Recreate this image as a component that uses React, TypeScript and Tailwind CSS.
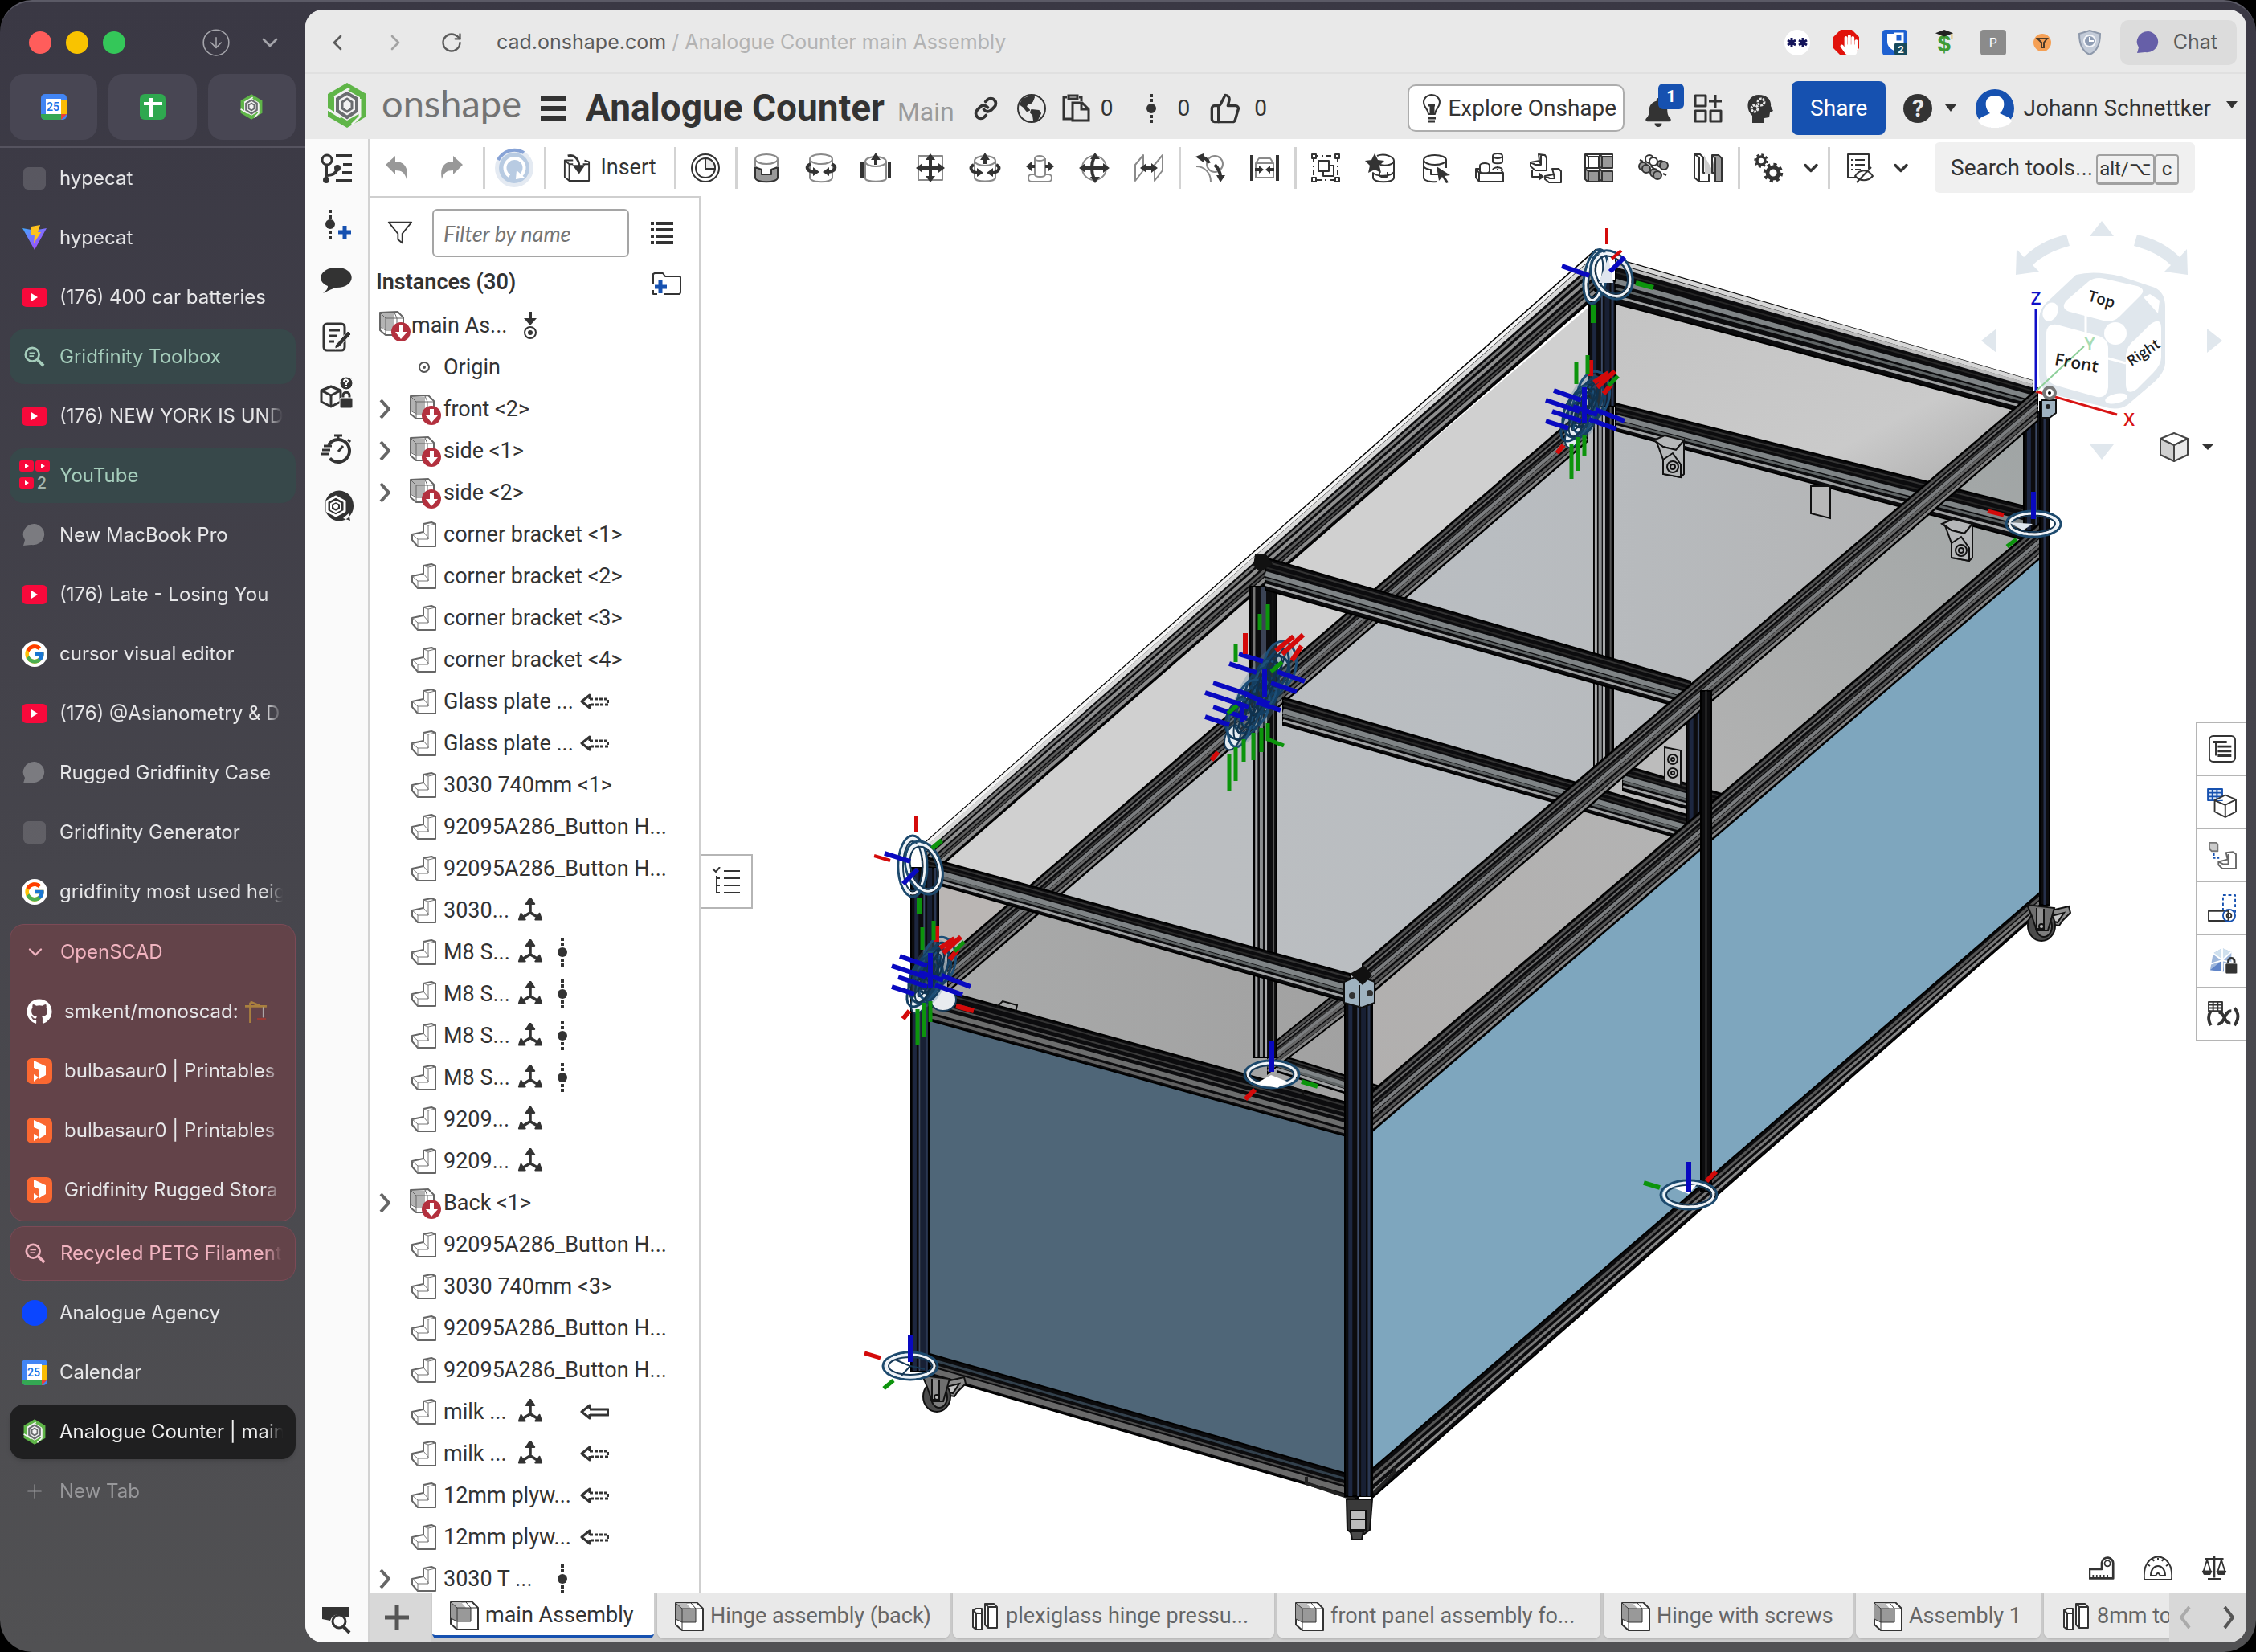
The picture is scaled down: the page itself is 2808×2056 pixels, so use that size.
import React from "react";
import {
  ChevronDown,
  ChevronLeft,
  ChevronRight,
  CircleArrowDown,
  Plus,
  RotateCw,
  Link as LinkIcon,
  ThumbsUp,
} from "lucide-react";
import { FaGithub, FaBell, FaHandPaper } from "react-icons/fa";
import { FcGoogle } from "react-icons/fc";

/* ---------- shared glyph helpers ---------- */

type GlyphProps = { children: React.ReactNode; className?: string; box?: string };

function Glyph({ children, className = "size-9", box = "0 0 36 36" }: GlyphProps) {
  return (
    <svg
      viewBox={box}
      className={`shrink-0 ${className}`}
      fill="none"
      stroke="#333"
      strokeWidth="2"
      strokeLinejoin="round"
      aria-hidden="true"
    >
      {children}
    </svg>
  );
}

function OnshapeMark({ className }: { className: string }) {
  return (
    <svg viewBox="0 0 50 56" className={`shrink-0 ${className}`} aria-hidden="true">
      <path d="M25 0 49 14V42L25 56 1 42V14Z" fill="#5fb548" />
      <path d="M25 9 41 18V38L25 47 9 38V18Z" fill="#f2f2f2" />
      <path d="M25 13 37 20V35L25 43 13 35V20Z" fill="none" stroke="#6a6d70" strokeWidth="4" />
      <path d="M25 20 31 24V32L25 36 19 32V24Z" fill="#f2f2f2" stroke="#6a6d70" strokeWidth="3" />
      <path d="M9 18 28 7M1 33 17 43M41 20V42L31 52" stroke="#f2f2f2" strokeWidth="3" fill="none" />
    </svg>
  );
}

function CalendarMark() {
  return (
    <svg viewBox="0 0 32 32" className="size-8 shrink-0" aria-hidden="true">
      <rect width="32" height="32" rx="5" fill="#4285f4" />
      <path d="M25 7h7v18h-7z" fill="#fbbc04" />
      <path d="M0 25h25v7H5a5 5 0 0 1-5-5z" fill="#34a853" />
      <path d="M25 25h7l-7 7z" fill="#ea4335" />
      <path d="M6 6h19v19H6z" fill="#fff" />
      <text x="15" y="21" fontSize="14" fontWeight="600" fontFamily="Roboto, sans-serif" textAnchor="middle" fill="#1a73e8">
        25
      </text>
    </svg>
  );
}

/* ---------- browser sidebar ---------- */

function TabIcon({ kind }: { kind: string }) {
  switch (kind) {
    case "blank":
      return <span className="size-7 rounded-md bg-white/15" />;
    case "vite":
      return (
        <svg viewBox="0 0 32 32" className="size-8" aria-hidden="true">
          <defs>
            <linearGradient id="vite" x1="0" y1="0" x2="1" y2="1">
              <stop offset="0" stopColor="#41a8ff" />
              <stop offset="1" stopColor="#bd34fe" />
            </linearGradient>
          </defs>
          <path d="M1 4 16 31 31 4 20 6H12Z" fill="url(#vite)" />
          <path d="m12 2 11-2-3 9h4l-9 14 1-10h-5z" fill="#ffc21e" />
        </svg>
      );
    case "youtube":
      return (
        <span className="flex h-6 w-8 items-center justify-center rounded-md bg-[#f8093b]">
          <span className="border-y-[5px] border-l-[8px] border-y-transparent border-l-white" />
        </span>
      );
    case "youtubes":
      return (
        <svg viewBox="0 0 38 38" className="size-[38px]" aria-hidden="true">
          {[
            [0, 0],
            [20, 0],
            [0, 21],
          ].map(([x, y]) => (
            <g key={`${x}-${y}`} transform={`translate(${x} ${y})`}>
              <rect width="18" height="14" rx="3" fill="#f8093b" />
              <path d="m7 4 5 3-5 3z" fill="#fff" />
            </g>
          ))}
          <text x="28" y="35" fontSize="20" fontWeight="500" fontFamily="Inter, sans-serif" textAnchor="middle" fill="#a3b5ae">
            2
          </text>
        </svg>
      );
    case "search":
      return (
        <svg viewBox="0 0 28 28" className="size-[26px]" fill="none" stroke="currentColor" strokeWidth="3" aria-hidden="true">
          <circle cx="11" cy="11" r="9" />
          <path d="m18 18 8 8" strokeWidth="4" />
          <path d="M7 9h8M7 13h6" strokeWidth="2" />
        </svg>
      );
    case "chat":
      return (
        <svg viewBox="0 0 30 28" className="h-7 w-[30px]" fill="#7b7b80" aria-hidden="true">
          <path d="M15 0a14 13 0 1 1-4 26L1 27l2-7A14 13 0 0 1 15 0Z" />
        </svg>
      );
    case "google":
      return (
        <span className="flex size-8 items-center justify-center rounded-full bg-white">
          <FcGoogle className="size-7" />
        </span>
      );
    case "github":
      return <FaGithub className="size-8 text-white" />;
    case "printables":
      return (
        <svg viewBox="0 0 32 32" className="size-8" aria-hidden="true">
          <rect width="32" height="32" rx="7" fill="#fa6831" />
          <path d="M9 3 24 10V21L16 26V15L9 12Z" fill="#fff" />
          <path d="m9 20 6 4-6 5z" fill="#fff" />
        </svg>
      );
    case "blue":
      return <span className="size-8 rounded-full bg-[#0b46ff]" />;
    case "calendar":
      return <CalendarMark />;
    case "onshape":
      return <OnshapeMark className="h-8 w-7" />;
    case "chevron":
      return <ChevronDown className="size-7" />;
    default:
      return <Plus className="size-7" strokeWidth={1} />;
  }
}

type Tab = { icon: string; label: string; tone?: "plain" | "green" | "rose" | "active" | "muted" | "group"; crane?: boolean };

const topTabs: Tab[] = [
  { icon: "blank", label: "hypecat" },
  { icon: "vite", label: "hypecat" },
  { icon: "youtube", label: "(176) 400 car batteries" },
  { icon: "search", label: "Gridfinity Toolbox", tone: "green" },
  { icon: "youtube", label: "(176) NEW YORK IS UND" },
  { icon: "youtubes", label: "YouTube", tone: "green" },
  { icon: "chat", label: "New MacBook Pro" },
  { icon: "youtube", label: "(176) Late - Losing You" },
  { icon: "google", label: "cursor visual editor" },
  { icon: "youtube", label: "(176) @Asianometry & D" },
  { icon: "chat", label: "Rugged Gridfinity Case" },
  { icon: "blank", label: "Gridfinity Generator" },
  { icon: "google", label: "gridfinity most used heig" },
];

const groupTabs: Tab[] = [
  { icon: "github", label: "smkent/monoscad:", crane: true },
  { icon: "printables", label: "bulbasaur0 | Printables" },
  { icon: "printables", label: "bulbasaur0 | Printables" },
  { icon: "printables", label: "Gridfinity Rugged Stora" },
];

const bottomTabs: Tab[] = [
  { icon: "search", label: "Recycled PETG Filament", tone: "rose" },
  { icon: "blue", label: "Analogue Agency" },
  { icon: "calendar", label: "Calendar" },
  { icon: "onshape", label: "Analogue Counter | main", tone: "active" },
  { icon: "plus", label: "New Tab", tone: "muted" },
];

const tones = {
  plain: "text-[#e6e6e8]",
  green: "bg-[#37484a] text-[#a5cdbb]",
  rose: "border border-[#7c4a56] bg-[#634349] text-[#f0b3bf]",
  active: "bg-[#1f1f20] text-[#f0f0f0] shadow-md",
  muted: "text-[#98989b]",
  group: "text-[#f0b3bf]",
};

function SidebarTab({ tab, inset = false }: { tab: Tab; inset?: boolean }) {
  return (
    <button
      type="button"
      className={`flex h-[68px] w-full shrink-0 items-center overflow-hidden rounded-[18px] pr-4 text-left text-2xl ${
        inset ? "pl-[5px]" : ""
      } ${tones[tab.tone ?? "plain"]}`}
    >
      <span className="flex w-[62px] shrink-0 items-center justify-center">
        <TabIcon kind={tab.icon} />
      </span>
      <span className="flex min-w-0 flex-1 items-center gap-2 overflow-hidden whitespace-nowrap [mask-image:linear-gradient(to_right,#000_92%,transparent)]">
        {tab.label}
        {tab.crane && (
          <svg viewBox="0 0 30 30" className="size-7 shrink-0" fill="none" stroke="#a9803f" strokeWidth="3" aria-hidden="true">
            <path d="M7 30V3M0 8h29M7 2l12 5" />
            <path d="M24 9v14" strokeWidth="1" stroke="#bbb" />
            <path d="M16 25h12" stroke="#9a3b35" />
          </svg>
        )}
      </span>
    </button>
  );
}

function Sidebar() {
  return (
    <aside className="flex w-[380px] shrink-0 flex-col font-['Inter',sans-serif]">
      <div className="flex h-[90px] items-center pt-3 pr-[28px] pl-9 text-[#a4a4aa]">
        <div className="flex gap-[18px]">
          <span className="size-7 rounded-full bg-[#ff5d5b]" />
          <span className="size-7 rounded-full bg-[#f9c300]" />
          <span className="size-7 rounded-full bg-[#34c759]" />
        </div>
        <button type="button" aria-label="Downloads" className="ml-auto">
          <CircleArrowDown className="size-[38px]" strokeWidth={1} />
        </button>
        <button type="button" aria-label="More" className="ml-8">
          <ChevronDown className="size-8" />
        </button>
      </div>
      <div className="grid grid-cols-3 gap-[14px] px-3">
        {["calendar", "sheets", "onshape"].map((kind) => (
          <button key={kind} type="button" aria-label={kind} className="flex h-[82px] items-center justify-center rounded-[18px] bg-[#484653]">
            {kind === "sheets" ? (
              <svg viewBox="0 0 32 32" className="size-8" aria-hidden="true">
                <rect width="32" height="32" rx="6" fill="#2fa84f" />
                <path d="M14 5v23M5 12h23" stroke="#fff" strokeWidth="4" />
              </svg>
            ) : (
              <TabIcon kind={kind} />
            )}
          </button>
        ))}
      </div>
      <hr className="mt-2 border-t-2 border-[#55535f]" />
      <nav className="mt-1 flex flex-col gap-[6px] px-3" aria-label="Tabs">
        {topTabs.map((tab, i) => (
          <SidebarTab key={i} tab={tab} />
        ))}
        <div className="flex flex-col gap-[6px] rounded-[18px] border border-[#7c4a56] bg-[#634349] pb-1">
          <SidebarTab tab={{ icon: "chevron", label: "OpenSCAD", tone: "group" }} />
          {groupTabs.map((tab, i) => (
            <SidebarTab key={i} tab={tab} inset />
          ))}
        </div>
        {bottomTabs.map((tab) => (
          <SidebarTab key={tab.label} tab={tab} />
        ))}
      </nav>
    </aside>
  );
}

/* ---------- browser bar ---------- */

function Extensions() {
  return (
    <div className="flex items-center gap-[29px]">
      <span className="flex size-8 items-center justify-center rounded-full bg-white">
        <svg viewBox="0 0 26 14" className="h-[14px] w-[26px]" stroke="#14145a" strokeWidth="3" aria-hidden="true">
          <path d="M6 1v12M1 4l10 6M11 4 1 10M20 1v12M15 4l10 6M25 4l-10 6" />
        </svg>
      </span>
      <svg viewBox="0 0 32 32" className="size-8" aria-hidden="true">
        <path d="M9 0h14l9 9v14l-9 9H9l-9-9V9Z" fill="#e1120b" />
        <FaHandPaper x="7" y="6" width="18" height="20" color="#fff" />
      </svg>
      <svg viewBox="0 0 32 32" className="size-8" aria-hidden="true">
        <rect width="31" height="32" rx="4" fill="#1f61d1" />
        <path d="M6 5h10v22c-6-3-10-7-10-12Z" fill="#fff" />
        <path d="M16 5h9v10H16Z" fill="none" stroke="#fff" strokeWidth="3" />
        <rect x="15" y="16" width="16" height="16" rx="3" fill="#174a5c" />
        <text x="23" y="29" textAnchor="middle" fontSize="13" fontWeight="700" fontFamily="Roboto, sans-serif" fill="#fff">
          2
        </text>
      </svg>
      <span className="relative flex size-8 items-end justify-center text-[27px] leading-7 font-bold text-[#3f9b35]">
        $
        <svg viewBox="0 0 26 14" className="absolute top-0 h-3 w-[26px]" aria-hidden="true">
          <path d="m13 0 13 5-13 5L0 5Z" fill="#222" />
          <path d="M24 6v8" stroke="#d9b33c" strokeWidth="2" />
        </svg>
      </span>
      <span className="flex size-8 items-center justify-center rounded bg-[#8b8b8b] text-base text-white">P</span>
      <span className="flex size-8 items-center justify-center">
        <svg viewBox="0 0 22 22" className="size-[22px]" aria-hidden="true">
          <circle cx="11" cy="11" r="11" fill="#f5a055" />
          <path d="M5 6h12l-4 5v6h-3v-6Z" fill="none" stroke="#4a3a2a" strokeWidth="2" />
        </svg>
      </span>
      <svg viewBox="0 0 28 32" className="h-8 w-7" aria-hidden="true">
        <path d="M14 1 27 5c0 14-4 22-13 26C5 27 1 19 1 5Z" fill="#c3cbd8" stroke="#8e99ab" strokeWidth="2" />
        <circle cx="14" cy="14" r="7" fill="#8f9db4" stroke="#f2f4f8" strokeWidth="2" />
        <path d="M14 9v5h5" stroke="#fff" strokeWidth="2" fill="none" />
      </svg>
    </div>
  );
}

function BrowserBar() {
  return (
    <div className="flex h-20 items-center border-b-2 border-[#e0e0e0] bg-[#e9e9e9] pt-1 pr-3 pl-6 font-['Inter',sans-serif] text-[25px] text-[#5b5b5b]">
      <button type="button" aria-label="Back">
        <ChevronLeft className="size-8" />
      </button>
      <button type="button" aria-label="Forward" className="ml-10 text-[#a3a3a3]">
        <ChevronRight className="size-8" />
      </button>
      <button type="button" aria-label="Reload" className="ml-10">
        <RotateCw className="size-7" />
      </button>
      <p className="ml-[42px] whitespace-nowrap">
        <span>cad.onshape.com</span>
        <span className="text-[#b3b3b3]"> / Analogue Counter main Assembly</span>
      </p>
      <div className="ml-auto">
        <Extensions />
      </div>
      <button type="button" className="ml-6 flex h-14 items-center gap-4 rounded-[10px] bg-[#dcdcdc] pr-6 pl-5">
        <svg viewBox="0 0 30 28" className="h-7 w-[30px]" fill="#665fa8" aria-hidden="true">
          <path d="M15 0a14 13 0 1 1-4 26L1 27l2-7A14 13 0 0 1 15 0Z" />
        </svg>
        Chat
      </button>
    </div>
  );
}

/* ---------- application header ---------- */

function VersionDot() {
  return (
    <Glyph className="h-9 w-4" box="0 0 16 36">
      <circle cx="8" cy="18" r="6" fill="#333" stroke="none" />
      <path d="M8 0v4M8 6v4M8 26v4M8 32v4" strokeWidth="4" />
    </Glyph>
  );
}

function AppHeader() {
  return (
    <header className="flex h-[81px] items-center bg-[#e9e9e9] pt-1 pr-[11px] pl-[27px] text-[28px] text-[#333]">
      <a href="#home" className="-mt-2 flex items-center gap-[18px]" aria-label="Onshape home">
        <OnshapeMark className="h-14 w-[50px]" />
        <span className="pb-1 font-['Lato',sans-serif] text-[47px] leading-none text-[#737373]">onshape</span>
      </a>
      <button type="button" aria-label="Menu" className="ml-6">
        <Glyph className="h-[30px] w-8" box="0 0 32 30">
          <path d="M0 3h32M0 15h32M0 27h32" strokeWidth="6" />
        </Glyph>
      </button>
      <h1 className="ml-6 text-[46px] font-bold whitespace-nowrap">Analogue Counter</h1>
      <span className="mt-2 ml-4 text-[32px] text-[#9b9b9b]">Main</span>
      <div className="ml-6 flex items-center">
        <button type="button" aria-label="Copy link">
          <LinkIcon className="size-[30px]" strokeWidth={3} />
        </button>
        <button type="button" aria-label="Public" className="ml-6">
          <Glyph>
            <circle cx="18" cy="18" r="17" />
            <path d="M7 7 16 3l5 1-2 5-3 3-3-1-2 5 4 4-3 1-4-5-4-3Z" fill="#333" />
            <path d="m18 20 9 1 2 3-4 8-4 1-1-7-3-3Z" fill="#333" />
          </Glyph>
        </button>
        <button type="button" className="ml-5 flex items-center gap-3">
          <Glyph>
            <path d="M6 4H2v27h10M24 9V4h-3M8 2h11v4H8Z" strokeWidth="3" strokeLinejoin="miter" />
            <path d="M13 11h12l8 8v14H13ZM24 11v8h9" strokeWidth="3" strokeLinejoin="miter" />
          </Glyph>
          0
        </button>
        <button type="button" className="ml-10 flex items-center gap-6">
          <VersionDot />0
        </button>
        <button type="button" className="ml-6 flex items-center gap-4">
          <ThumbsUp className="size-10" />0
        </button>
      </div>
      <button type="button" className="ml-auto flex h-[59px] items-center gap-2 rounded-[10px] border-2 border-[#adadad] bg-white pr-2 pl-4 whitespace-nowrap">
        <Glyph className="h-9 w-6" box="0 0 24 36">
          <path d="M8 25c0-6-6-8-6-15a10 9 0 0 1 20 0c0 7-6 9-6 15Z" />
          <path d="M8 14h8M11 15v10M14 15v10M7 30h10M8 34h8" strokeWidth="3" />
        </Glyph>
        Explore Onshape
      </button>
      <button type="button" aria-label="Notifications" className="relative ml-6 h-[62px] w-[50px]">
        <FaBell className="absolute bottom-2 left-0 size-9" />
        <span className="absolute top-0 right-0 flex size-8 items-center justify-center rounded-md bg-[#1651b0] text-xl font-bold text-white">1</span>
      </button>
      <button type="button" aria-label="Applications" className="ml-3">
        <Glyph>
          <path d="M2 2h13v13H2ZM2 21h13v13H2ZM21 21h13v13H21ZM27 1v16M19 9h16" strokeWidth="3" />
        </Glyph>
      </button>
      <button type="button" aria-label="Learning" className="ml-7">
        <Glyph>
          <path d="M17 1c11 0 16 7 15 14l3 6-4 2-1 6-6 1v6H9v-9C-1 18 3 1 17 1Z" fill="#333" stroke="none" />
          <circle cx="20" cy="10" r="4" stroke="#e9e9e9" strokeWidth="3" strokeDasharray="3 1" />
          <circle cx="12" cy="18" r="4" stroke="#e9e9e9" strokeWidth="3" strokeDasharray="3 1" />
        </Glyph>
      </button>
      <button type="button" className="ml-[22px] h-[67px] rounded-lg bg-[#1651b0] px-[23px] text-white">
        Share
      </button>
      <button type="button" aria-label="Help" className="ml-[22px] flex items-center gap-4">
        <span className="flex size-9 items-center justify-center rounded-full bg-[#333] text-3xl leading-none font-bold text-[#e9e9e9]">?</span>
        <span className="border-x-[7px] border-t-[9px] border-x-transparent border-t-[#333]" />
      </button>
      <button type="button" className="ml-6 flex items-center gap-[11px] whitespace-nowrap">
        <svg viewBox="0 0 48 48" className="size-12" aria-hidden="true">
          <circle cx="24" cy="24" r="24" fill="#1651b0" />
          <path d="M24 8c15 0 13 17 6 22 6 3 14 5 15 10-8 11-34 11-42 0 1-5 9-7 15-10-7-5-9-22 6-22Z" fill="#fff" />
        </svg>
        Johann Schnettker
        <span className="mb-2 ml-2 border-x-[7px] border-t-[9px] border-x-transparent border-t-[#333]" />
      </button>
    </header>
  );
}

/* ---------- toolbar ---------- */

const grey = "#8a8a8a";

const mateIcons: [string, React.ReactNode][] = [
  [
    "Fastened mate",
    <>
      <path d="M4 17v13c0 7 28 7 28 0V17l-8 3v6H12v-6Z" fill="#999" />
      <path d="M4 7v10M32 7v10" stroke={grey} />
      <ellipse cx="18" cy="7" rx="14" ry="6" stroke={grey} />
    </>,
  ],
  [
    "Revolute mate",
    <>
      <path d="M4 7v23c0 7 28 7 28 0V7" stroke={grey} />
      <ellipse cx="18" cy="7" rx="14" ry="6" stroke={grey} />
      <path d="M5 13c-7 3-5 9 4 10M31 13c7 3 5 9-4 10" strokeWidth="4" />
      <path d="m8 17 8 6-8 5ZM28 17l-8 6 8 5Z" fill="#333" stroke="none" />
    </>,
  ],
  [
    "Slider mate",
    <>
      <path d="M5 10v21c0 5 26 5 26 0V10" stroke={grey} />
      <ellipse cx="18" cy="10" rx="13" ry="6" stroke={grey} />
      <path d="M1 10v20M35 10v20M18 6v8" strokeWidth="4" />
      <path d="m18-1 6 9H12Z" fill="#333" stroke="none" />
    </>,
  ],
  [
    "Planar mate",
    <>
      <path d="M3 3h30v30H3Z" stroke={grey} />
      <path d="M18 6v24M6 18h24" strokeWidth="4" />
      <path d="m18 0 6 8H12ZM18 36l6-8H12ZM0 18l8-6v12ZM36 18l-8-6v12Z" fill="#333" stroke="none" />
    </>,
  ],
  [
    "Cylindrical mate",
    <>
      <path d="M5 9v21c0 6 26 6 26 0V9" stroke={grey} />
      <ellipse cx="18" cy="9" rx="13" ry="6" stroke={grey} />
      <path d="M4 14c-6 3-4 9 5 10M32 14c6 3 4 9-5 10M18 6v7" strokeWidth="4" />
      <path d="m8 18 8 6-8 5ZM28 18l-8 6 8 5ZM18-1l6 9H12Z" fill="#333" stroke="none" />
    </>,
  ],
  [
    "Pin slot mate",
    <>
      <rect x="4" y="26" width="29" height="9" rx="4" stroke={grey} />
      <path d="M12 6v20c0 4 13 4 13 0V6" stroke={grey} fill="#fff" />
      <ellipse cx="18" cy="6" rx="6" ry="3" stroke={grey} />
      <path d="M4 16h8M25 16h8" strokeWidth="4" />
      <path d="m1 16 7-6v12ZM36 16l-7-6v12Z" fill="#333" stroke="none" />
    </>,
  ],
  [
    "Ball mate",
    <>
      <circle cx="18" cy="18" r="15" stroke={grey} />
      <path d="M18 4c-4 9-4 19 0 28M4 18h28" strokeWidth="4" />
      <path d="m19-1 6 8H13ZM19 37l6-8H13ZM-1 18l8-6v12ZM37 18l-8-6v12Z" fill="#333" stroke="none" />
    </>,
  ],
  [
    "Parallel mate",
    <>
      <path d="M1 14 11 2v19L1 34ZM25 14 35 2v19L25 34Z" stroke={grey} />
      <path d="M12 18h12" strokeWidth="4" />
      <path d="m7 18 8-6v12ZM29 18l-8-6v12Z" fill="#333" stroke="none" />
    </>,
  ],
];

const relationIcons: [string, React.ReactNode][] = [
  [
    "Tangent mate",
    <>
      <circle cx="24" cy="13" r="10" stroke={grey} />
      <path d="M1 16c10 0 18 8 18 19" stroke={grey} />
      <path d="M6 5c4-1 9 2 11 7M24 14c4 4 7 9 7 15" strokeWidth="4" />
      <path d="M0 4 10 0v11ZM31 36l-5-9h11Z" fill="#333" stroke="none" />
    </>,
  ],
  [
    "Width mate",
    <>
      <path d="M2 2v32M34 2v32" strokeWidth="4" />
      <path d="M7 12v18h22V12l-4-6H11ZM7 12h22" stroke={grey} />
      <path d="M6 20h8M22 20h8" strokeWidth="4" />
      <path d="m17 20-6-5v10ZM19 20l6-5v10Z" fill="#333" stroke="none" />
    </>,
  ],
];

const assemblyIcons: [string, React.ReactNode][] = [
  [
    "Group",
    <>
      <path d="M3 3h30v30H3Z" strokeDasharray="6 4 2 4" />
      <path d="M1 1h5v5H1ZM30 1h5v5h-5ZM1 30h5v5H1ZM30 30h5v5h-5Z" fill="#fff" />
      <path d="M9 9h13v13H9Z" />
      <path d="M22 15h6v13H15v-6" />
    </>,
  ],
  [
    "Mate connector",
    <>
      <path d="M14 3c9-4 21 1 21 6v21c0 7-26 7-26 0v-6c4 5 22 5 26-1M18 14c9 2 17-1 17-5M17 21v7c3 2 9 2 10 0v-5" />
      <path d="m11 0 4 8 8 1-6 6 2 9-8-4-8 4 2-9-6-6 8-1Z" fill="#333" stroke="none" />
    </>,
  ],
  [
    "Select mate",
    <>
      <ellipse cx="18" cy="8" rx="14" ry="6" />
      <path d="M4 8v7c0 3 5 5 9 5v6h9M32 8v10M4 15v15c0 4 9 6 16 5" />
      <path d="m20 16 17 11-7 1 5 8-3 1-5-8-4 5Z" fill="#333" stroke="none" />
    </>,
  ],
  [
    "Snap mode",
    <>
      <path d="m1 19 4 5h30v11H5l-4-5ZM5 24v11M1 19h4M31 19l4 5" />
      <ellipse cx="12" cy="15" rx="6" ry="3" fill="#fff" />
      <path d="M6 15v7c0 3 12 3 12 0v-7M22 21c0-5 12-5 12 0" fill="#fff" />
      <ellipse cx="28" cy="3" rx="6" ry="3" />
      <path d="M22 3v7c0 3 12 3 12 0V3" />
      <path d="M28 15v8" strokeDasharray="2 2" />
    </>,
  ],
  [
    "Replicate",
    <>
      <path d="m11 1 8 1 2 4v15H7l-6-5v-5l11-2ZM1 11l6 3h7l-2-5M14 14V2" />
      <path d="M28 19h8l3 3v14H24l-5-4v-4l11-2ZM19 28l6 3h6l-1-5" />
      <path d="M3 21v8h9" />
      <path d="m18 29-7-6v11Z" fill="#333" stroke="none" />
    </>,
  ],
  [
    "Linear pattern",
    <>
      <path d="m1 1 4 3h13v14H1Z" fill="#fff" />
      <path d="m19 1 3 3h13v14H22l-3-1Z" fill="#999" />
      <path d="m1 19 4 3h13v13H4l-3-3ZM19 19l3 3h13v13H22l-3-3Z" fill="#999" />
      <path d="M5 4v14M22 4v14M5 22v13M22 22v13M1 1h34v3M5 4h13" />
    </>,
  ],
  [
    "Circular pattern",
    <>
      <circle cx="13" cy="7" r="5" fill="#fff" />
      <circle cx="18" cy="10" r="5" fill="#fff" />
      <g fill="#999">
        <circle cx="27" cy="13" r="4" />
        <circle cx="31" cy="15" r="5" />
        <circle cx="5" cy="16" r="5" />
        <circle cx="9" cy="19" r="5" />
        <circle cx="19" cy="24" r="5" />
        <circle cx="23" cy="27" r="5" />
      </g>
      <path d="m1 8 4 2M15 16l4 3M30 25l4 2" />
    </>,
  ],
  [
    "Explode",
    <>
      <path d="m1 1 6 4v30l-6-5ZM1 1h7l4 4v19h7v11H7" fill="#fff" />
      <path d="M13 2 23 20v5h-9Z" fill="#ccc" stroke="none" />
      <path d="m23 3 4 3v29h8V6l-4-4h-8v22h4" fill="#999" />
    </>,
  ],
];

function ToolButton({ name, children }: { name: string; children: React.ReactNode }) {
  return (
    <button type="button" aria-label={name} className="flex h-full w-[68px] shrink-0 items-center justify-center">
      {children}
    </button>
  );
}

function Divider() {
  return (
    <span className="flex w-2 shrink-0 justify-center" aria-hidden="true">
      <span className="h-[52px] w-[3px] bg-[#d3d3d3]" />
    </span>
  );
}

function IconRun({ items }: { items: [string, React.ReactNode][] }) {
  return (
    <>
      {items.map(([name, art]) => (
        <ToolButton key={name} name={name}>
          <Glyph className="size-9 overflow-visible">{art}</Glyph>
        </ToolButton>
      ))}
    </>
  );
}

function Gear({ x, y, r }: { x: number; y: number; r: number }) {
  return (
    <g transform={`translate(${x} ${y})`}>
      <circle r={r} strokeWidth={r * 0.7} />
      <circle r={r * 1.5} strokeWidth={r * 0.5} strokeDasharray={`${r * 0.59} ${r * 0.59}`} />
    </g>
  );
}

function Toolbar() {
  return (
    <div className="flex h-[71px] items-center bg-white text-[27px] text-[#333]" role="toolbar" aria-label="Assembly tools">
      <ToolButton name="Undo">
        <svg viewBox="0 0 28 30" className="h-[30px] w-7" fill="#989898" aria-hidden="true">
          <path d="M0 11 12 0v7c12 0 17 9 14 22-2-8-6-11-14-11v5Z" />
        </svg>
      </ToolButton>
      <ToolButton name="Redo">
        <svg viewBox="0 0 28 30" className="h-[30px] w-7" fill="#989898" aria-hidden="true">
          <path d="M28 11 16 0v7C4 7-1 16 2 29c2-8 6-11 14-11v5Z" />
        </svg>
      </ToolButton>
      <span className="w-[2px] shrink-0" />
      <Divider />
      <ToolButton name="Update">
        <svg viewBox="0 0 50 50" className="size-[50px]" fill="none" aria-hidden="true">
          <circle cx="25" cy="25" r="24" fill="#e4eaf2" />
          <circle cx="25" cy="25" r="19" fill="#b8cbe2" />
          <path d="M5 15A23 23 0 0 1 37 6" stroke="#87a3d6" strokeWidth="4" />
          <path d="M19 35a12 12 0 1 1 13 0" stroke="#fff" strokeWidth="4" />
          <path d="m28 28 10 9-11 2Z" fill="#fff" />
        </svg>
      </ToolButton>
      <Divider />
      <button type="button" className="flex w-[154px] shrink-0 items-center justify-center gap-3">
        <Glyph className="size-[34px]">
          <path d="M13 8H2v22l6 5h26V10l-6-2M2 8l6 5v22M8 13h5M26 13h8" />
          <path d="M6 2c9-2 15 5 15 14" strokeWidth="3" />
          <path d="M12 14h17l-8 12Z" fill="#333" stroke="none" />
        </Glyph>
        Insert
      </button>
      <Divider />
      <ToolButton name="History">
        <Glyph>
          <circle cx="18" cy="18" r="17" />
          <circle cx="18" cy="18" r="12" fill="#fff" />
          <path d="M18 6a12 12 0 0 1 12 13H18Z" fill="#e9e9e9" />
        </Glyph>
      </ToolButton>
      <Divider />
      <IconRun items={mateIcons} />
      <Divider />
      <IconRun items={relationIcons} />
      <Divider />
      <IconRun items={assemblyIcons} />
      <Divider />
      <ToolButton name="Gear relations">
        <Glyph className="size-9 overflow-visible">
          <Gear x={8} y={9} r={5} />
          <Gear x={23} y={24} r={7} />
        </Glyph>
      </ToolButton>
      <button type="button" aria-label="More relations" className="flex w-9 justify-center">
        <ChevronDown className="size-7" strokeWidth={3} />
      </button>
      <Divider />
      <ToolButton name="Display options">
        <Glyph className="size-9 overflow-visible">
          <path d="M14 30H4V1h26v18M8 8h3M13 8h12M8 14h3M13 14h12M8 20h3M13 20h7" />
          <path d="M13 28c6-9 16-9 22 0-6 7-16 7-22 0ZM15 36 33 17" />
        </Glyph>
      </ToolButton>
      <button type="button" aria-label="More display options" className="flex w-9 justify-center">
        <ChevronDown className="size-7" strokeWidth={3} />
      </button>
      <button type="button" className="ml-6 flex h-[63px] items-center rounded-md bg-[#f0f0f0] px-5 whitespace-nowrap">
        <span className="text-[28px]">Search tools...</span>
        <kbd className="mt-1 ml-1 rounded border-2 border-b-4 border-[#a0a0a0] px-[2px] font-[inherit] text-2xl">alt/⌥</kbd>
        <kbd className="mt-1 rounded border-2 border-b-4 border-[#a0a0a0] px-[7px] font-[inherit] text-2xl">c</kbd>
      </button>
    </div>
  );
}

/* ---------- left rail ---------- */

function Rail() {
  const items: [string, React.ReactNode][] = [
    [
      "Structure",
      <>
        <circle cx="8" cy="8" r="6" strokeWidth="3" />
        <path d="M7 14v18M7 27c8 0 13-2 14-9" strokeWidth="4" />
        <circle cx="7" cy="33" r="4" fill="#333" stroke="none" />
        <circle cx="21" cy="18" r="4" fill="#333" stroke="none" />
        <path d="M19 3h20M28 14h11M27 24h12M19 34h20" strokeWidth="4" />
      </>,
    ],
    [
      "Add version",
      <>
        <circle cx="12" cy="18" r="6" fill="#333" stroke="none" />
        <path d="M12 0v4M12 7v4M12 26v4M12 33v4" strokeWidth="4" />
        <path d="M22 28h16M30 20v16" stroke="#1651b0" strokeWidth="5" />
      </>,
    ],
    ["Comments", <path d="M20 2c25 0 25 25 0 25-3 0-6 2-17 7 5-4 6-6 6-9C-6 19-1 2 20 2Z" fill="#333" stroke="none" />],
    [
      "Properties",
      <>
        <rect x="4" y="2" width="26" height="33" rx="4" strokeWidth="3" />
        <path d="M10 10h14M10 17h11M10 24h7" strokeWidth="3" />
        <path d="m18 29 16-18 4 4-15 16-5 2Z" fill="#333" stroke="#fafafa" strokeWidth="1" />
      </>,
    ],
    [
      "Permissions",
      <>
        <path d="m1 15 12-5 12 5v14l-12 6-12-6ZM1 15l12 6 12-6M13 21v14" strokeWidth="3" />
        <circle cx="32" cy="6" r="8" fill="#333" stroke="#fafafa" strokeWidth="1" />
        <path d="M29 4c0-4 6-3 5 0l-2 2v2M32 9v2" stroke="#fff" />
        <path d="M28 25v-4c0-5 8-5 8 0v4" strokeWidth="3" />
        <rect x="24" y="24" width="16" height="13" rx="2" fill="#333" stroke="#fafafa" strokeWidth="1" />
      </>,
    ],
    [
      "Performance",
      <>
        <circle cx="22" cy="20" r="14" strokeWidth="4" strokeDasharray="70 18" transform="rotate(-150 22 20)" />
        <path d="M17 1h10M22 1v5M34 6l3 3M22 21l6-7M4 14h10M2 19h10M1 24h10" strokeWidth="3" />
      </>,
    ],
    [
      "Ask",
      <>
        <path d="M19 0a18 19 0 1 1 0 37A18 19 0 0 1 19 0ZM28 34l9 3-2-9Z" fill="#333" stroke="none" />
        <path d="m19 7 11 6v12l-11 6-11-6V13Z" stroke="#fff" strokeWidth="3" />
        <path d="m19 13 6 3v7l-6 3-6-3v-7Z" stroke="#fff" />
        <circle cx="19" cy="19" r="3" fill="#fff" stroke="none" />
      </>,
    ],
  ];
  return (
    <nav className="flex w-20 shrink-0 flex-col items-center border-r-2 border-[#d3d3d3] bg-[#fafafa] pt-[18px] pb-[10px]" aria-label="Panels">
      <div className="flex flex-col gap-[34px]">
        {items.map(([name, art]) => (
          <button key={name} type="button" aria-label={name}>
            <Glyph className="h-9 w-10 overflow-visible" box="0 0 40 36">
              {art}
            </Glyph>
          </button>
        ))}
      </div>
      <button type="button" aria-label="Find" className="mt-auto">
        <Glyph className="h-9 w-[38px]" box="0 0 38 36">
          <path d="M1 17V2h34v12h-6a11 11 0 0 0-18 5Z" fill="#333" stroke="none" />
          <circle cx="22" cy="20" r="8" strokeWidth="3" />
          <path d="m27 26 8 8" strokeWidth="4" />
        </Glyph>
      </button>
    </nav>
  );
}

/* ---------- instance tree ---------- */

function AssemblyIcon() {
  return (
    <Glyph className="size-9 overflow-visible">
      <path d="m1 2 22-1 7 7v22H8l-7-6Z" fill="#fff" stroke="#666" />
      <path d="M2 3h17v20H8l-6-3Z" fill="#b4b4b4" stroke="none" />
      <path d="M8 9v21M1 2l7 7h22M19 2l3 7v15H8l-7-4" stroke="#666" strokeWidth="1" />
      <circle cx="27" cy="26" r="12" fill="#b3303e" stroke="none" />
      <path d="M25 18h5v8h5l-8 9-7-9h5Z" fill="#fff" stroke="none" />
    </Glyph>
  );
}

function PartIcon() {
  return (
    <Glyph className="size-9" box="-2 -2 36 36">
      <path d="m15 3 10-2 5 2v28H8l-7-8v-7l14-3Z" stroke="#666" fill="#fff" />
      <path d="m1 16 7 6v9M8 22h13v-2l-6-7M21 22V5l9-2M15 3l6 2" stroke="#777" strokeWidth="1" />
    </Glyph>
  );
}

function MarkTriad() {
  return (
    <Glyph className="size-8">
      <path d="M18 22V5M18 21 5 29M18 21l13 8" strokeWidth="4" />
      <path d="m18 0 6 9H12ZM2 31l3-9 6 9ZM34 31l-3-9-6 9Z" fill="#333" />
    </Glyph>
  );
}

function MarkArrow({ solid }: { solid: boolean }) {
  return (
    <Glyph className="h-5 w-9" box="0 0 36 20">
      <path d="M12 7V2L2 10l10 8v-5" strokeWidth="3" />
      <path d="M12 7h23v7H12" strokeWidth="3" strokeDasharray={solid ? undefined : "4 2"} />
    </Glyph>
  );
}

type Row = { name: string; kind?: "part" | "asm" | "origin"; open?: boolean; marks?: string };

const rows: Row[] = [
  { name: "Origin", kind: "origin" },
  { name: "front <2>", kind: "asm", open: true },
  { name: "side <1>", kind: "asm", open: true },
  { name: "side <2>", kind: "asm", open: true },
  { name: "corner bracket <1>" },
  { name: "corner bracket <2>" },
  { name: "corner bracket <3>" },
  { name: "corner bracket <4>" },
  { name: "Glass plate ...", marks: "--d" },
  { name: "Glass plate ...", marks: "--d" },
  { name: "3030 740mm <1>" },
  { name: "92095A286_Button H..." },
  { name: "92095A286_Button H..." },
  { name: "3030...", marks: "t" },
  { name: "M8 S...", marks: "tv" },
  { name: "M8 S...", marks: "tv" },
  { name: "M8 S...", marks: "tv" },
  { name: "M8 S...", marks: "tv" },
  { name: "9209...", marks: "t" },
  { name: "9209...", marks: "t" },
  { name: "Back <1>", kind: "asm", open: true },
  { name: "92095A286_Button H..." },
  { name: "3030 740mm <3>" },
  { name: "92095A286_Button H..." },
  { name: "92095A286_Button H..." },
  { name: "milk ...", marks: "t-s" },
  { name: "milk ...", marks: "t-d" },
  { name: "12mm plyw...", marks: "--d" },
  { name: "12mm plyw...", marks: "--d" },
  { name: "3030 T ...", open: true, marks: "-v" },
];

function Mark({ code }: { code: string }) {
  if (code === "t") return <MarkTriad />;
  if (code === "v") return <VersionDot />;
  if (code === "s" || code === "d") return <MarkArrow solid={code === "s"} />;
  return null;
}

function TreeRow({ row }: { row: Row }) {
  return (
    <li className="relative flex h-[52px] items-center pl-2">
      <span className="flex w-6 shrink-0 justify-center">
        {row.open && (
          <button type="button" aria-label={`Expand ${row.name}`}>
            <Glyph className="h-6 w-4" box="0 0 16 24">
              <path d="m2 1 10 11L2 23" stroke="#666" strokeWidth="4" />
            </Glyph>
          </button>
        )}
      </span>
      <span className="ml-[18px] flex w-9 shrink-0 justify-center">
        {row.kind === "origin" ? (
          <Glyph className="size-4" box="0 0 16 16">
            <circle cx="8" cy="8" r="6" stroke="#555" />
            <circle cx="8" cy="8" r="2" fill="#555" stroke="none" />
          </Glyph>
        ) : row.kind === "asm" ? (
          <AssemblyIcon />
        ) : (
          <PartIcon />
        )}
      </span>
      <span className="ml-[6px] whitespace-nowrap">{row.name}</span>
      {row.marks && (
        <span className="absolute left-[180px] flex h-full items-center">
          {row.marks.split("").map((code, i) => (
            <span key={i} className="flex w-10 justify-center">
              <Mark code={code} />
            </span>
          ))}
        </span>
      )}
    </li>
  );
}

function InstancePanel() {
  return (
    <section className="flex w-[412px] shrink-0 flex-col overflow-hidden border-t-2 border-r-2 border-[#cfcfcf] bg-white text-[27px] text-[#333]">
      <div className="mt-[14px] flex items-center pr-8 pl-[22px]">
        <Glyph className="size-8">
          <path d="M2 3h32L21 19v13l-6-5v-8Z" />
        </Glyph>
        <input
          aria-label="Filter by name"
          placeholder="Filter by name"
          className="ml-6 h-[60px] min-w-0 flex-1 rounded-md border-2 border-[#a5a5a5] px-3 font-['Lato',sans-serif] text-[27px] italic placeholder:text-[#757575]"
        />
        <button type="button" aria-label="List view" className="ml-[27px]">
          <Glyph className="size-7" box="0 0 28 28">
            <path d="M0 2h4M0 10h4M0 18h4M0 26h4M6 2h22M6 10h22M6 18h22M6 26h22" strokeWidth="4" />
          </Glyph>
        </button>
      </div>
      <div className="mt-[7px] flex h-12 items-center justify-between pr-[22px] pl-2">
        <h2 className="text-[27px] font-semibold">Instances (30)</h2>
        <button type="button" aria-label="New folder" className="mt-1">
          <Glyph className="h-7 w-9" box="0 0 36 28">
            <path d="M1 14V2l2-1h10l3 4h18l1 1v19l-1 2H15M6 27H1v-5" />
            <path d="M3 18h15M10 10v16" stroke="#1651b0" strokeWidth="5" />
          </Glyph>
        </button>
      </div>
      <ul className="mt-1 min-h-0 flex-1 overflow-hidden">
        <li className="relative flex h-[52px] items-center pl-3">
          <AssemblyIcon />
          <span className="ml-1">main As...</span>
          <span className="absolute left-[192px]">
            <Glyph className="h-[34px] w-4 overflow-visible" box="0 0 16 34">
              <path d="M8 0v10" strokeWidth="4" />
              <path d="M0 8h16l-8 9Z" fill="#333" stroke="none" />
              <circle cx="8" cy="26" r="7" />
              <circle cx="8" cy="26" r="3" fill="#333" stroke="none" />
            </Glyph>
          </span>
        </li>
        {rows.map((row, i) => (
          <TreeRow key={i} row={row} />
        ))}
      </ul>
    </section>
  );
}

/* ---------- 3D model drawing ---------- */

type Pt = [number, number];
type Stripe = [number, string, number];

const mix = (a: Pt, b: Pt, t: number): Pt => [a[0] + (b[0] - a[0]) * t, a[1] + (b[1] - a[1]) * t];

const railStripes: Stripe[] = [
  [0.1, "#4f4f4f", 3],
  [0.24, "#6a6a6a", 2],
  [0.38, "#3a3a3a", 2],
  [0.5, "#7b7d7f", 4],
  [0.62, "#666", 3],
  [0.78, "#555", 3],
  [0.91, "#858585", 3],
];
const crossStripes: Stripe[] = [
  [0.12, "#333", 2],
  [0.3, "#262626", 2],
  [0.5, "#7f8486", 6],
  [0.66, "#5e6364", 3],
  [0.84, "#a0a2a3", 3],
];
const edgeStripes: Stripe[] = [
  [0.06, "#f4f4f4", 4],
  [0.18, "#d9d9d9", 5],
  [0.34, "#777", 3],
  [0.5, "#8f8f8f", 4],
  [0.66, "#5c5c5c", 3],
  [0.77, "#4a4a4a", 2],
  [0.88, "#8a8a8a", 4],
];
const postStripes: Stripe[] = [
  [0.2, "#1d2740", 5],
  [0.48, "#3c4a66", 2],
  [0.68, "#182034", 6],
  [0.88, "#2a3752", 3],
];
const greyPost: Stripe[] = [
  [0.1, "#a4a6a8", 3],
  [0.32, "#8b8e90", 4],
  [0.52, "#a9abad", 3],
  [0.86, "#555", 2],
];

function Beam({ a, b, c, d, stripes = railStripes }: { a: Pt; b: Pt; c: Pt; d: Pt; stripes?: Stripe[] }) {
  return (
    <g>
      <path d={`M${a}L${b}L${d}L${c}Z`} fill="#0c0c0e" stroke="#000" strokeWidth="2" />
      {stripes.map(([t, color, w]) => {
        const p = mix(a, b, t);
        const q = mix(c, d, t);
        return <line key={t} x1={p[0]} y1={p[1]} x2={q[0]} y2={q[1]} stroke={color} strokeWidth={w} />;
      })}
    </g>
  );
}

/* Rail whose two ends are cut vertically: x, top and bottom at either end. */
function Rail3({ at, stripes }: { at: [number, number, number, number, number, number]; stripes?: Stripe[] }) {
  const [x1, t1, b1, x2, t2, b2] = at;
  return <Beam a={[x1, t1]} b={[x1, b1]} c={[x2, t2]} d={[x2, b2]} stripes={stripes} />;
}

function Post({ at, stripes = postStripes }: { at: [number, number, number, number]; stripes?: Stripe[] }) {
  const [l, r, t, b] = at;
  return <Beam a={[l, t]} b={[r, t]} c={[l, b]} d={[r, b]} stripes={stripes} />;
}

function Ring({ x, y, rx = 34, ry = 17, turn = 0 }: { x: number; y: number; rx?: number; ry?: number; turn?: number }) {
  return (
    <g transform={`translate(${x} ${y}) rotate(${turn})`} fill="none">
      <ellipse rx={rx} ry={ry} stroke="#1d4a6e" strokeWidth="3" />
      <ellipse rx={rx - 4} ry={ry - 3} stroke="#eef3f8" strokeWidth="3" />
      <ellipse rx={rx - 7} ry={ry - 6} stroke="#173a58" strokeWidth="2" />
    </g>
  );
}

/* A pile of overlapping mate connectors, leaning down to the left. */
function Cluster({ x, y, long = false }: { x: number; y: number; long?: boolean }) {
  const loops = long ? [-36, -28, -20, -12, -4, 4, 12, 20, 28, 36] : [-16, -10, -4, 2, 8, 14];
  const reach = long ? 20 : 0;
  return (
    <g transform={`translate(${x} ${y})`} fill="none">
      <ellipse rx={long ? 26 : 22} ry={long ? 72 : 44} transform={long ? "rotate(28)" : "rotate(18)"} fill="#5b82a04d" />
      <ellipse cx={-14 - reach} cy={34 + reach} rx="9" ry="16" transform={`rotate(20 ${-14 - reach} ${34 + reach})`} fill="#e6edf3" stroke="#173a58" strokeWidth="2" />
      {loops.map((o, i) => (
        <ellipse
          key={o}
          cx={-o * 0.7}
          cy={o}
          rx={i % 2 ? 14 : 20}
          ry="30"
          transform={`rotate(${10 + (i % 3) * 10} ${-o * 0.7} ${o})`}
          stroke={i % 3 ? "#143f62" : "#1d4f78"}
          strokeWidth="3"
        />
      ))}
      {loops.map((o, i) => (
        <ellipse
          key={`s${o}`}
          cx={-o * 0.6}
          cy={o}
          rx={i % 2 ? 9 : 5}
          ry="22"
          transform={`rotate(${i % 2 ? 18 : 26} ${-o * 0.6} ${o})`}
          stroke="#10324e"
          strokeWidth="2"
        />
      ))}
      <g stroke="#0909c0" strokeWidth="6">
        {long ? (
          <path d="M-26-50l30 9M-38-38l34 11M-58-14l46 15M-68-2l54 18M-58 16l42 14M-68 28l30 10M22-28l34 12M14-14l32 11M-4 10l30 10M-18 0l30 12M6-32V4M-22 12v22" />
        ) : (
          <path d="M-38-22l34 12M-48-10l42 14M-40 4l36 12M-48 16l28 9M14 2l36 14M6 14l34 12M0-26V18M-14-2l30 10" />
        )}
      </g>
      <g stroke="#d40a0a" strokeWidth="6">
        {long ? <path d="M28-50l26-24M40-42l12-18M20-54l22-18M-18-76v26M-52 72l-8 10" /> : <path d="M16-26l22-20M24-18l10-12M12-32l18-12M8-60v20M-26 46l-8 10" />}
      </g>
      <g stroke="#0c940c" strokeWidth="5">
        {long ? (
          <path d="M-30-62v22M10-112v32M0-100v20M14-28l14-12M-40 24l12-10M-38 74v46M-30 66v42M-20 56v28M-8 48v34M2 42v30M10 36v20l20 8" />
        ) : (
          <path d="M-10-58v28M4-66v24M30-28l12-12M-16 44v44M-8 36v42M0 34v26" />
        )}
      </g>
    </g>
  );
}

function Bracket({ x, y }: { x: number; y: number }) {
  return (
    <g transform={`translate(${x} ${y})`} fill="#b5b7b8" stroke="#111" strokeWidth="2">
      <path d="M-24-24-10-30 14-24 4-12-12-16Z" />
      <path d="M-20-22-12-16 4-12 14-24v42l-4 4-22-4V0Z" />
      <path d="M-12 0 0-8 10 6v16l-22-4Z" />
      <circle cy="9" r="7" />
      <circle cy="9" r="3" />
    </g>
  );
}

function Caster({ x, y }: { x: number; y: number }) {
  return (
    <g transform={`translate(${x} ${y})`} stroke="#111" strokeWidth="2">
      <path d="M8-10 34-16 36-8 26 2 22 8 10 6Z" fill="#8d8d8d" />
      <path d="m12-4 16-4-8 12-8-2Z" fill="#c4c4c4" />
      <ellipse cy="8" rx="17" ry="19" fill="#4b4b4b" />
      <ellipse cx="3" cy="9" rx="10" ry="13" fill="#7e7e7e" />
      <path d="M-18-18 16-14 8 14-6 14-12-4Z" fill="#6f6f6f" />
      <path d="M-6-14v26h9v-25" fill="#8f8f8f" />
      <circle cy="9" r="3" fill="#bbb" />
    </g>
  );
}

function ViewCube() {
  return (
    <g fontFamily="'Open Sans', sans-serif" fontWeight="600">
      <g fill="#e0e7ed">
        <path d="m2616 275 15 19h-30ZM2616 572l15-19h-30ZM2466 424l19-15v30ZM2766 424l-19-15v30Z" />
        <path d="M2572 292 2576 306Q2546 314 2530 330L2538 338 2509 342 2510 310 2519 320Q2540 299 2572 292Z" />
        <path d="M2660 292 2656 306Q2686 314 2702 330L2694 338 2723 342 2722 310 2713 320Q2692 299 2660 292Z" />
        <path d="M2584 342Q2607 336 2640 344L2682 358Q2695 364 2695 382V452Q2694 466 2676 480L2648 504Q2636 512 2618 506L2552 490Q2538 484 2538 466V398Q2538 384 2550 374Z" />
      </g>
      <g fill="#fff">
        <path d="M2600 350Q2608 344 2620 347L2660 356Q2672 360 2664 368L2638 394Q2630 402 2618 399L2576 388Q2564 384 2572 374Z" />
        <path d="M2560 404 2612 418Q2624 422 2624 434V482Q2622 496 2610 494L2560 480Q2547 476 2547 464V414Q2548 402 2560 404Z" />
        <path d="M2658 422 2676 404Q2690 394 2690 408V444Q2690 454 2680 464L2660 484Q2646 494 2646 478V442Q2647 430 2658 422Z" />
        <circle cx="2633" cy="415" r="14" />
        <ellipse cx="2552" cy="388" rx="9" ry="12" transform="rotate(25 2552 388)" />
        <ellipse cx="2634" cy="496" rx="14" ry="6" transform="rotate(-12 2634 496)" />
        <path d="m2676 366 12 8-2 16-18-20Z" />
      </g>
      <path d="M2596 392v26M2624 446l22 6" stroke="#fff" strokeWidth="3" />
      <path d="M2534 384v103" stroke="#1010c8" strokeWidth="3" />
      <path d="m2534 487 101 29" stroke="#d81414" strokeWidth="3" />
      <path d="m2534 487 60-56" stroke="#8fd09b" strokeWidth="2" />
      <g fill="#1f1f1f" textAnchor="middle">
        <text x="2616" y="379" fontSize="19" transform="rotate(16 2616 372)">
          Top
        </text>
        <text x="2585" y="459" fontSize="21" transform="rotate(10 2585 450)">
          Front
        </text>
        <text x="2667" y="445" fontSize="18" transform="rotate(-34 2667 437)">
          Right
        </text>
      </g>
      <g fontSize="22" textAnchor="middle">
        <text x="2534" y="379" fill="#1010c8">
          Z
        </text>
        <text x="2650" y="530" fill="#d81414">
          X
        </text>
        <text x="2601" y="436" fill="#a8dcb2">
          Y
        </text>
      </g>
      <g stroke="#444" strokeWidth="2" strokeLinejoin="round">
        <path d="m2706 539 17 7-17 8-17-8Z" fill="#fff" />
        <path d="m2689 546 17 8v20l-17-8Z" fill="#d0d0d0" />
        <path d="m2723 546-17 8v20l17-8Z" fill="#e9e9e9" />
      </g>
      <path d="M2740 552h16l-8 8Z" fill="#333" />
    </g>
  );
}

function Model() {
  return (
    <svg viewBox="872 244 1924 1738" preserveAspectRatio="xMidYMid meet" className="absolute inset-0 size-full" role="img" aria-label="Analogue Counter main assembly model">
      <defs>
        <linearGradient id="inside" x1="0" y1="0" x2="1" y2="0">
          <stop offset="0" stopColor="#bdbfc1" />
          <stop offset="0.5" stopColor="#b9bdc1" />
          <stop offset="1" stopColor="#b2b2b2" />
        </linearGradient>
        <linearGradient id="back" x1="0" y1="0" x2="1" y2="1">
          <stop offset="0" stopColor="#c4c4c4" />
          <stop offset="0.6" stopColor="#cacaca" />
          <stop offset="1" stopColor="#9f9f9f" />
        </linearGradient>
        <linearGradient id="front" x1="0" y1="0" x2="1" y2="0">
          <stop offset="0" stopColor="#a9aaaa" />
          <stop offset="1" stopColor="#a1a1a1" />
        </linearGradient>
        <linearGradient id="side" x1="0" y1="1" x2="1" y2="0">
          <stop offset="0" stopColor="#b1afae" />
          <stop offset="0.45" stopColor="#b3b3b3" />
          <stop offset="1" stopColor="#9fa4a4" />
        </linearGradient>
      </defs>

      {/* panels */}
      <path d="M1160 1080 1980 380V560L1180 1240Z" fill="#d0d0d0" />
      <path d="M1180 1230 2004 500 2534 636V690L1700 1390Z" fill="url(#inside)" />
      <path d="M2008 376 2534 510V650L2008 516Z" fill="url(#back)" />
      <path d="M1700 1230 2540 515V680L1700 1400Z" fill="url(#side)" />
      <path d="M2132 860 2100 900V1020L2040 1010 1980 970 2140 830Z" fill="#bcbcbc" />
      <path d="M1166 1096 1690 1245V1385L1166 1240Z" fill="url(#front)" />
      <path d="M1168 1096 1270 1124 1180 1196H1168Z" fill="#bab6b4" />
      <path d="M1708 1404 2540 690V1114L1708 1834Z" fill="#7ea6be" />
      <path d="M1156 1266 1676 1412V1838L1156 1686Z" fill="#4f6678" />

      {/* back frame */}
      <Post at={[1984, 2008, 500, 956]} stripes={greyPost} />
      <Post at={[1978, 2011, 350, 505]} />
      <Rail3 at={[2011, 502, 536, 2520, 630, 672]} stripes={crossStripes} />
      <Rail3 at={[2011, 322, 378, 2530, 474, 516]} stripes={[[0.05, "#d8d8d8", 5], [0.15, "#bbb", 4], ...crossStripes.slice(1)]} />
      <Bracket x={2082} y={572} />
      <path d="M2254 605h24v40l-24-6Z" fill="#b7b7b7" stroke="#111" strokeWidth="2" />
      <Bracket x={2441} y={676} />
      <Rail3 at={[2020, 952, 984, 2150, 990, 1020]} stripes={crossStripes} />
      <Rail3 at={[1590, 1312, 1334, 1730, 1356, 1378]} stripes={crossStripes} />
      <Rail3 at={[1578, 1304, 1336, 1680, 1222, 1258]} />

      {/* left rails */}
      <Rail3 at={[1180, 1190, 1234, 1975, 506, 550]} />
      <Rail3 at={[1148, 1052, 1098, 1985, 312, 370]} stripes={edgeStripes} />

      {/* middle frame */}
      <Post at={[1561, 1589, 860, 1316]} stripes={greyPost} />
      <Post at={[1556, 1589, 730, 880]} stripes={[[0.15, "#777", 3], [0.5, "#3a4254", 7], [0.85, "#111", 3]]} />
      <Rail3 at={[1597, 868, 902, 2100, 1014, 1046]} stripes={crossStripes} />
      <Rail3 at={[1575, 694, 734, 2104, 848, 884]} stripes={crossStripes} />
      <path d="M1562 690h14l8 12-16 10-8-8Z" fill="#111" />
      <g fill="#b9b9b9" stroke="#111" strokeWidth="2">
        <path d="M2072 930 2092 934V978L2072 972Z" />
        <circle cx="2082" cy="945" r="6" />
        <circle cx="2082" cy="962" r="6" />
        <circle cx="2082" cy="945" r="2" />
        <circle cx="2082" cy="962" r="2" />
      </g>

      {/* front and right frame */}
      <Post at={[2519, 2551, 512, 660]} />
      <Post at={[2099, 2130, 870, 1034]} />
      <Rail3 at={[1708, 1358, 1408, 2540, 650, 694]} />
      <Rail3 at={[1696, 1200, 1246, 2536, 484, 524]} />
      <Rail3 at={[1708, 1828, 1864, 2540, 1110, 1134]} stripes={[[0.25, "#555", 3], [0.5, "#777", 3], [0.78, "#8a8a8a", 3]]} />
      <Post at={[2117, 2130, 860, 1482]} stripes={[[0.5, "#333", 2]]} />
      <Post at={[2539, 2551, 500, 1126]} stripes={[[0.5, "#26304a", 3]]} />
      <Rail3 at={[1150, 1066, 1096, 1680, 1212, 1248]} stripes={crossStripes} />
      <Rail3 at={[1150, 1226, 1268, 1676, 1372, 1414]} stripes={[[0.1, "#333", 2], [0.3, "#3c3c3c", 2], [0.47, "#555", 2], [0.68, "#6d6e6e", 6], [0.88, "#606060", 4]]} />
      <Rail3 at={[1154, 1684, 1710, 1690, 1838, 1866]} stripes={[[0.25, "#32404c", 3], [0.5, "#4a4a4a", 2], [0.76, "#6a6a6a", 7]]} />
      <path d="M1626 1838v8l60 20M1710 1858l26-26v-6" fill="none" stroke="#222" strokeWidth="4" />
      <Post at={[1134, 1168, 1080, 1240]} />
      <Post at={[1134, 1156, 1220, 1706]} />
      <Post at={[1674, 1708, 1230, 1862]} />
      <path d="m1673 1222 18-8 20 8v26l-16 6-22-6Z" fill="#9fb2c0" stroke="#111" strokeWidth="2" />
      <path d="m1680 1212 18-10 10 12-12 12Z" fill="#111" />
      <circle cx="1683" cy="1239" r="4" fill="#333" />
      <circle cx="1705" cy="1236" r="4" fill="#333" />
      <path d="M1692 1226v26" stroke="#111" strokeWidth="2" />
      <path d="M2541 498h18v16l-8 6h-10Z" fill="#9fb2c0" stroke="#111" strokeWidth="2" />
      <circle cx="2549" cy="506" r="3" fill="#222" />
      <path d="m1240 1254 8-8 18 5-2 9M1600 1350l22 8v6" fill="none" stroke="#111" strokeWidth="2" />

      {/* casters */}
      <Caster x={2541} y={1144} />
      <Caster x={1166} y={1730} />
      <g stroke="#111" strokeWidth="2">
        <path d="M1676 1866h32l-3 38-8 6h-12l-8-6Z" fill="#3a3a3a" />
        <path d="M1681 1880h19v24h-19Z" fill="#bdbdbd" />
        <path d="M1681 1891h19" />
        <path d="M1681 1906h16l-2 10h-12Z" fill="#4a4a4a" />
      </g>

      {/* mate connectors */}
      <Ring x={1986} y={344} rx={34} ry={14} turn={100} />
      <Ring x={2006} y={342} rx={32} ry={24} turn={60} />
      <path d="M1990 352 2002 320 2008 352Z" fill="#dfe5ee" />
      <g strokeWidth="6">
        <path d="m1944 331 34 12M2004 338l18-18" stroke="#0909c0" />
        <path d="M2000 284v20M2006 322l12-10" stroke="#d40a0a" strokeWidth="4" />
        <path d="m2036 352 22 6M1983 380v22" stroke="#0c940c" />
      </g>
      <Cluster x={1972} y={508} />
      <Cluster x={1568} y={864} long />
      <Ring x={1136} y={1078} rx={38} ry={18} turn={90} />
      <Ring x={1150} y={1080} rx={34} ry={22} turn={72} />
      <g strokeWidth="6">
        <path d="m1101 1062 32 10M1124 1100l18-18" stroke="#0909c0" />
        <path d="M1140 1016v20M1088 1065l20 6" stroke="#d40a0a" strokeWidth="4" />
        <path d="m1160 1056 12-10M1144 1118v20" stroke="#0c940c" />
      </g>
      <ellipse cx="1174" cy="1244" rx="16" ry="14" fill="#e8ebef" stroke="#173a58" strokeWidth="2" />
      <Cluster x={1158} y={1212} />
      <path d="m1190 1252 22 6" stroke="#d40a0a" strokeWidth="6" />
      <Ring x={1583} y={1337} />
      <path d="m1564 1348 18-10 20 8-12 8Z" fill="#fff" />
      <path d="M1583 1296v38" stroke="#0909c0" strokeWidth="6" />
      <path d="m1620 1346 20 6" stroke="#0c940c" strokeWidth="6" />
      <path d="m1562 1356-12 12" stroke="#d40a0a" strokeWidth="6" />
      <Ring x={2102} y={1487} rx={35} ry={18} />
      <path d="m2082 1478 30-4-10 12Z" fill="#fff" />
      <path d="M2102 1446v38" stroke="#0909c0" strokeWidth="6" />
      <path d="m2046 1472 20 6" stroke="#0c940c" strokeWidth="6" />
      <path d="m2124 1470 12-12" stroke="#d40a0a" strokeWidth="6" />
      <Ring x={1133} y={1700} rx={34} ry={17} />
      <path d="M1114 1692 1133 1700 1122 1712M1133 1700l18 4" fill="none" stroke="#173a58" strokeWidth="2" />
      <path d="M1133 1661v34" stroke="#0909c0" strokeWidth="6" />
      <path d="m1076 1684 20 6" stroke="#d40a0a" strokeWidth="5" />
      <path d="m1112 1718-12 10" stroke="#0c940c" strokeWidth="5" />
      <Ring x={2531} y={652} rx={34} ry={16} />
      <path d="m2500 650 30 2-12 8Z" fill="#dfe5ee" />
      <path d="M2531 612v34" stroke="#0909c0" strokeWidth="6" />
      <path d="m2474 636 20 5" stroke="#d40a0a" strokeWidth="5" />
      <path d="m2498 680 12-9" stroke="#0c940c" strokeWidth="5" />

      <ViewCube />
      <circle cx="2551" cy="489" r="7" fill="#fff" stroke="#777" strokeWidth="4" />
      <circle cx="2551" cy="489" r="2" fill="#111" />
    </svg>
  );
}

/* ---------- canvas ---------- */

const sideTools: [string, React.ReactNode][] = [
  [
    "Configuration panel",
    <>
      <rect x="1" y="1" width="34" height="34" rx="5" />
      <path d="M6 9h18M12 15h18M12 21h18M12 27h18M10 9v18" strokeWidth="3" />
    </>,
  ],
  [
    "Bill of materials",
    <>
      <path d="M-1 1h19v15H-1ZM-1 6h19M-1 11h19M5 1v15M11 1v15" stroke="#1651b0" fill="#dbe6f6" />
      <path d="m8 16 14-7 14 6v16l-14 7-14-7ZM8 16l14 6 14-7M22 22v16" fill="#fff" />
    </>,
  ],
  [
    "Mate features",
    <>
      <path d="M1 2h9l2 2v9H4l-3-3Z" fill="#ccc" stroke="#777" />
      <path d="M7 16v6h8" stroke="#1651b0" strokeDasharray="3 2" />
      <path d="m23 15 9-1 4 3v19H18l-5-5v-4l12-3ZM13 27l6 3h7V17" stroke="#666" />
    </>,
  ],
  [
    "Section view",
    <>
      <path d="M19 22V1h16v24" stroke="#1651b0" strokeDasharray="4 3" />
      <path d="M0 22h26v13H0Z" />
      <circle cx="27" cy="28" r="8" stroke="#1651b0" />
      <circle cx="27" cy="28" r="3" />
    </>,
  ],
  [
    "Appearance",
    <>
      <path d="M2 30 6 8 18 1 30 6v14H20v12Z" fill="#9fb8dc" stroke="none" />
      <path d="M2 30 18 17 20 32Z" fill="#5f84c8" stroke="none" />
      <path d="m6 8 12 9 12-11L18 1Z" fill="#cfe0ee" stroke="none" />
      <path d="M18 1v31M2 22l16-5 12 3M6 8l12 9 12-11" stroke="#fff" />
      <rect x="22" y="21" width="16" height="14" rx="2" fill="#333" stroke="#fff" strokeWidth="1" />
      <path d="M26 21v-3c0-5 8-5 8 0v3" strokeWidth="3" />
    </>,
  ],
  [
    "Variables",
    <>
      <path d="M0 2h18v12H0ZM0 6h18M0 10h18M6 2v12M12 2v12" />
      <path d="M3 14c-4 6-4 12 0 19M34 10c6 7 6 15 0 23M12 31c9 2 8-17 18-17M13 16c8-2 7 15 16 14" strokeWidth="4" />
    </>,
  ],
];

function Canvas() {
  return (
    <main className="relative min-w-0 flex-1 bg-white">
      <Model />
      <button type="button" aria-label="Show list" className="absolute top-[819px] left-0 flex h-[68px] w-[65px] items-center justify-center border-2 border-l-0 border-[#b5b5b5] bg-white">
        <Glyph className="size-9">
          <path d="m1 2 4 4 5-6M15 5h20M6 11v22M15 14h20M6 14h4M15 23h20M6 23h4M15 32h20M6 32h4" />
        </Glyph>
      </button>
      <div className="absolute top-[654px] right-0 flex w-[63px] flex-col border-t-2 border-l-2 border-[#b5b5b5]">
        {sideTools.map(([name, art]) => (
          <button key={name} type="button" aria-label={name} className="flex h-[66px] items-center justify-center border-b-2 border-[#b5b5b5] bg-white">
            <Glyph className="size-[34px] overflow-visible">{art}</Glyph>
          </button>
        ))}
      </div>
      <div className="absolute right-6 bottom-3 flex items-center gap-9">
        <button type="button" aria-label="Measure">
          <Glyph className="size-8">
            <path d="M1 19h17v-9a8 8 0 1 1 16 2v20H1Z" fill="#fff" strokeWidth="3" />
            <circle cx="26" cy="11" r="4" />
            <path d="M6 32v-5M11 32v-5M16 32v-5M21 32v-5M26 32v-5" />
          </Glyph>
        </button>
        <button type="button" aria-label="Angle">
          <Glyph className="size-9">
            <path d="M1 32C-3-6 39-6 35 32Z" />
            <path d="M9 27c0-16 18-16 18 0h-6l-3-4-3 4Z" fill="#fff" />
            <path d="M5 13l3 2M11 6l2 3M18 5v3M25 6l-2 3M31 13l-3 2" />
          </Glyph>
        </button>
        <button type="button" aria-label="Mass properties">
          <Glyph className="size-8">
            <path d="M5 5h26M18 1v30M9 33h18" strokeWidth="3" />
            <path d="M8 6 3 22h10ZM28 6l-5 16h10Z" />
            <path d="M2 22h12l-2 4H4ZM22 22h12l-2 4h-8Z" fill="#333" />
          </Glyph>
        </button>
      </div>
    </main>
  );
}

/* ---------- document tabs ---------- */

function DocIcon({ kind }: { kind: "asm" | "part" }) {
  return kind === "asm" ? (
    <Glyph>
      <path d="m1 1 26-1 8 8v27H9l-8-7Z" fill="#fff" />
      <path d="m1 1 8 7v17l-8-4ZM9 8h17v17H9Z" fill="#999" stroke="none" />
      <path d="m1 1 8 7h11l-6-7Z" fill="#bbb" stroke="none" />
      <path d="M1 1l8 7h26M9 8v27M26 8v17H9l-8-4M20 1l6 7" strokeWidth="1" />
    </Glyph>
  ) : (
    <Glyph>
      <path d="m3 10 4-2h7v26H7l-4-3ZM7 14v20M3 10l4 4h7" fill="#fff" />
      <path d="M18 2h11l4 4v26H22l-4-4ZM22 6v26M18 2l4 4h11" fill="#fff" />
    </Glyph>
  );
}

const docTabs: { name: string; kind: "asm" | "part"; width: string }[] = [
  { name: "Hinge assembly (back)", kind: "asm", width: "w-[364px]" },
  { name: "plexiglass hinge pressu...", kind: "part", width: "w-[400px]" },
  { name: "front panel assembly fo...", kind: "asm", width: "w-[402px]" },
  { name: "Hinge with screws", kind: "asm", width: "w-[310px]" },
  { name: "Assembly 1", kind: "asm", width: "w-[230px]" },
  { name: "8mm to", kind: "part", width: "w-[230px]" },
];

function DocTabs() {
  return (
    <footer className="flex h-[62px] shrink-0 bg-[#cdcdcd] text-[27px] text-[#666]">
      <button type="button" aria-label="New element" className="flex w-[76px] shrink-0 items-center justify-center bg-[#d8d8d8] pr-2">
        <Glyph className="size-[30px]" box="0 0 30 30">
          <path d="M15 0v30M0 15h30" stroke="#555" strokeWidth="5" />
        </Glyph>
      </button>
      <div className="flex min-w-0 flex-1 gap-1 overflow-hidden pb-[5px]">
        <button type="button" className="ml-[2px] flex w-[276px] shrink-0 items-center gap-2 rounded-b-md border-b-4 border-[#1651b0] bg-white pt-1 pl-[22px] whitespace-nowrap text-[#333]">
          <DocIcon kind="asm" />
          main Assembly
        </button>
        {docTabs.map((tab) => (
          <button key={tab.name} type="button" className={`flex ${tab.width} shrink-0 items-center gap-2 overflow-hidden rounded-b-lg bg-[#e9e9e9] pt-[2px] pl-[22px] whitespace-nowrap shadow-sm`}>
            <DocIcon kind={tab.kind} />
            {tab.name}
          </button>
        ))}
      </div>
      <div className="flex w-24 shrink-0 items-center justify-between bg-[#d8d8d8] pr-[10px] pl-2">
        <button type="button" aria-label="Previous tabs">
          <Glyph className="h-7 w-6" box="0 0 24 28">
            <path d="M17 1 7 14l10 13" stroke="#aaa" strokeWidth="4" />
          </Glyph>
        </button>
        <button type="button" aria-label="Next tabs">
          <Glyph className="h-7 w-6" box="0 0 24 28">
            <path d="m7 1 10 13L7 27" stroke="#555" strokeWidth="4" />
          </Glyph>
        </button>
      </div>
    </footer>
  );
}

export default function App() {
  return (
    <div className="h-screen w-full bg-black">
      <div className="flex h-full w-full overflow-hidden rounded-[40px] border-t-2 border-[#5b5a66] bg-gradient-to-b from-[#3a3844] to-[#515153]">
        <Sidebar />
        <div className="mt-[10px] mr-3 mb-3 flex min-w-0 flex-1 flex-col overflow-hidden rounded-[22px] bg-white font-['Roboto',sans-serif]">
          <BrowserBar />
          <AppHeader />
          <div className="flex min-h-0 flex-1">
            <Rail />
            <div className="flex min-w-0 flex-1 flex-col">
              <Toolbar />
              <div className="flex min-h-0 flex-1">
                <InstancePanel />
                <Canvas />
              </div>
              <DocTabs />
            </div>
          </div>
        </div>
      </div>
    </div>
  );
}
